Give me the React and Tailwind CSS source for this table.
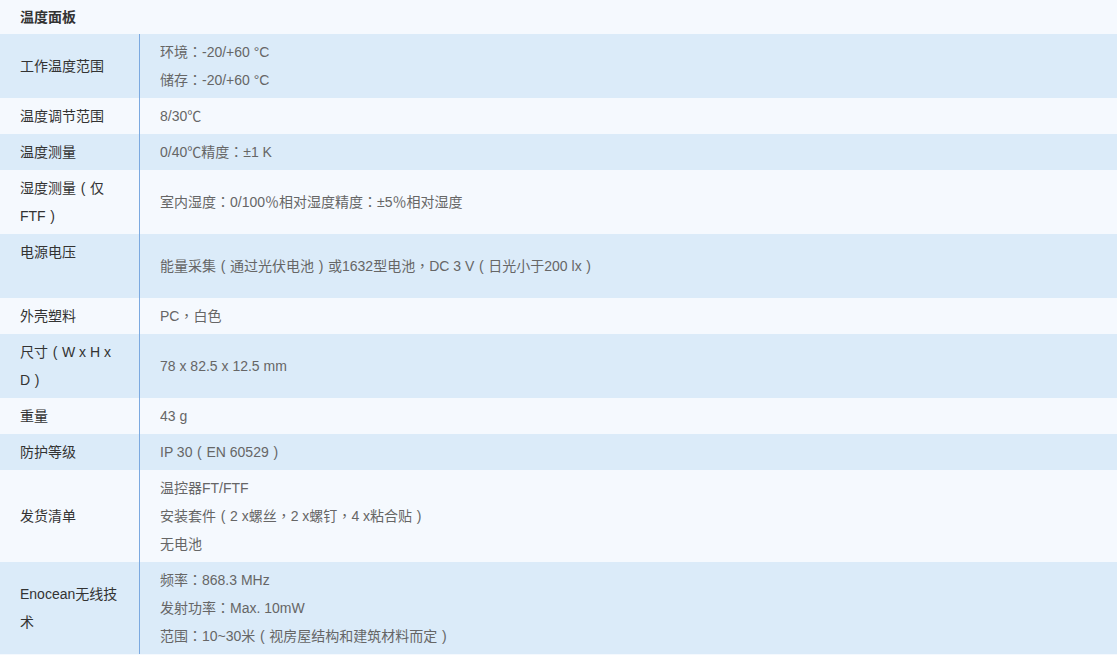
import React from "react";

const rows = [
  { l: ["工作温度范围"], r: ["环境：-20/+60 °C", "储存：-20/+60 °C"], bg: "b" },
  { l: ["温度调节范围"], r: ["8/30℃"], bg: "w" },
  { l: ["温度测量"], r: ["0/40℃精度：±1 K"], bg: "b" },
  { l: ["湿度测量（仅", "FTF）"], r: ["室内湿度：0/100％相对湿度精度：±5％相对湿度"], bg: "w" },
  { l: ["电源电压"], r: ["能量采集（通过光伏电池）或1632型电池，DC 3 V（日光小于200 lx）"], bg: "b", top: true, rh: true },
  { l: ["外壳塑料"], r: ["PC，白色"], bg: "w" },
  { l: ["尺寸（W x H x", "D）"], r: ["78 x 82.5 x 12.5 mm"], bg: "b" },
  { l: ["重量"], r: ["43 g"], bg: "w" },
  { l: ["防护等级"], r: ["IP 30（EN 60529）"], bg: "b" },
  { l: ["发货清单"], r: ["温控器FT/FTF", "安装套件（2 x螺丝，2 x螺钉，4 x粘合贴）", "无电池"], bg: "w" },
  { l: ["Enocean无线技", "术"], r: ["频率：868.3 MHz", "发射功率：Max. 10mW", "范围：10~30米（视房屋结构和建筑材料而定）"], bg: "b" },
];

function Txt({ t }) {
  const parts = t.split(/([，：（）])/);
  return (
    <>
      {parts.map((p, i) => {
        if (p === "，" || p === "：")
          return (
            <span key={i} className="leading-none font-['Noto_Sans_CJK_TC',sans-serif]">
              {p}
            </span>
          );
        if (p === "（")
          return (
            <span key={i} className="inline-block w-[14px] text-center">
              (
            </span>
          );
        if (p === "）")
          return (
            <span key={i} className="inline-block w-[14px] text-center">
              )
            </span>
          );
        return <React.Fragment key={i}>{p}</React.Fragment>;
      })}
    </>
  );
}

export default function App() {
  return (
    <div className="w-[1117px] h-[655px] bg-[#f5f9fe] text-[14px] leading-[28px] overflow-hidden font-['Liberation_Sans','Noto_Sans_CJK_SC',sans-serif]">
      <div className="h-[34px] flex items-center pl-[20px] font-bold text-[#333]">温度面板</div>
      {rows.map((row, i) => (
        <div key={i} className={`flex ${row.bg === "b" ? "bg-[#dbebf9]" : "bg-[#f5f9fe]"}`}>
          <div
            className={`w-[140px] shrink-0 box-border border-r border-[#7ba9e0] pl-[20px] py-[4px] text-[#333] whitespace-nowrap flex flex-col ${
              row.top ? "justify-start" : "justify-center"
            }`}
          >
            {row.l.map((t, j) => (
              <div key={j} className="h-[28px] overflow-hidden">
                <Txt t={t} />
              </div>
            ))}
          </div>
          <div
            className={`flex-1 pl-[20px] py-[4px] text-[#666] whitespace-nowrap flex flex-col justify-center ${
              row.rh ? "min-h-[64px]" : ""
            }`}
          >
            {row.r.map((t, j) => (
              <div key={j} className="h-[28px] overflow-hidden">
                <Txt t={t} />
              </div>
            ))}
          </div>
        </div>
      ))}
    </div>
  );
}
